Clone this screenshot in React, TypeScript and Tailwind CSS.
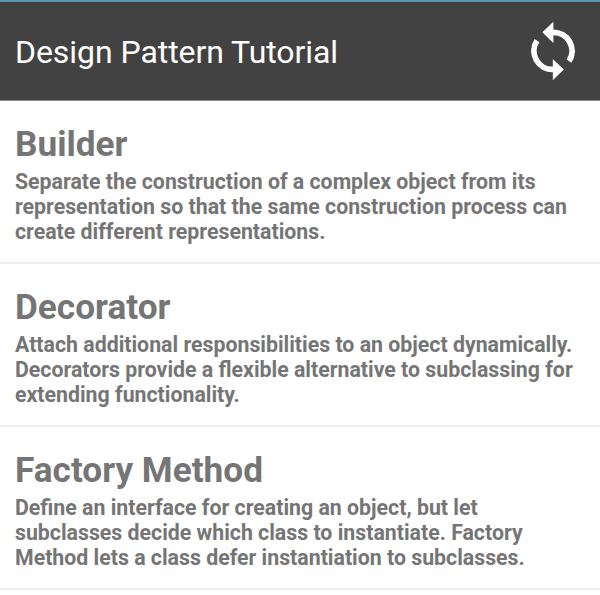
const patterns = [
  { name: "Builder", lines: ["Separate the construction of a complex object from its", "representation so that the same construction process can", "create different representations."] },
  { name: "Decorator", lines: ["Attach additional responsibilities to an object dynamically.", "Decorators provide a flexible alternative to subclassing for", "extending functionality."] },
  { name: "Factory Method", lines: ["Define an interface for creating an object, but let", "subclasses decide which class to instantiate. Factory", "Method lets a class defer instantiation to subclasses."] },
];

function SyncIcon() {
  return (
    <svg viewBox="0 0 44 60" className="h-[60px] w-[44px]" aria-label="Sync">
      <g fill="white">
        <path d="M11.3 11.3 22.4 .8V22Z" />
        <path d="M32.8 48.5 21.8 38V59.2Z" />
      </g>
      <g fill="none" stroke="white" strokeWidth="5.8">
        <path d="M21.5 11.4A18.6 18.6 0 0 1 38 40.2" />
        <path d="M22.5 48.4A18.6 18.6 0 0 1 6 19.6" />
      </g>
    </svg>
  );
}

export default function App() {
  return (
    <div className="flex h-[595px] w-[600px] flex-col overflow-hidden bg-white font-[Roboto,sans-serif] antialiased">
      <header className="flex h-[101px] shrink-0 items-center justify-between border-t-2 border-b border-t-[#559bb2] border-b-[#8a8a8a] bg-[#424242] pr-[25px] pl-[15px] text-white">
        <h1 className="whitespace-nowrap pt-[2px] text-[32px] leading-[40px] tracking-[-0.06px]">Design Pattern Tutorial</h1>
        <SyncIcon />
      </header>
      <main>
        {patterns.map((p) => (
          <section key={p.name} className="h-[163px] border-b-2 border-[#eeeeee] px-[15px] pt-[22px] text-[#757575]">
            <h2 className="whitespace-nowrap text-[35.2px] leading-[42px] font-bold">{p.name}</h2>
            <p className="mt-[4px] whitespace-nowrap text-[21.3px] leading-[25px] font-bold">
              {p.lines.map((l) => <span key={l} className="block">{l}</span>)}
            </p>
          </section>
        ))}
      </main>
    </div>
  );
}
